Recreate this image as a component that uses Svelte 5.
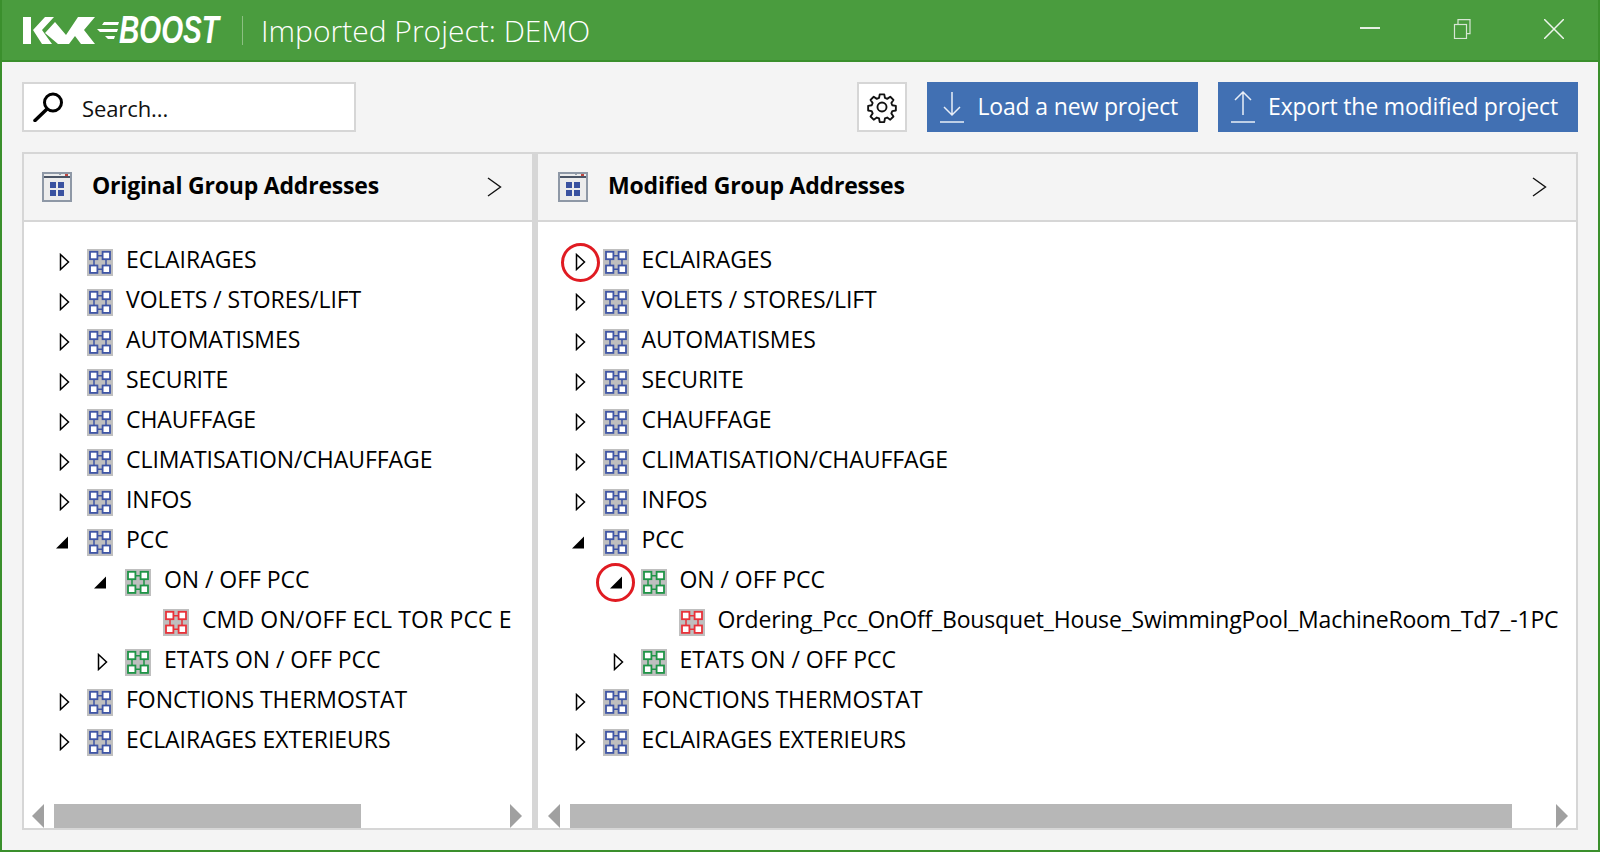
<script>
  const groups = [
    { name: "ECLAIRAGES" },
    { name: "VOLETS / STORES/LIFT" },
    { name: "AUTOMATISMES" },
    { name: "SECURITE" },
    { name: "CHAUFFAGE" },
    { name: "CLIMATISATION/CHAUFFAGE" },
    { name: "INFOS" },
    { name: "PCC", open: true },
    { name: "ON / OFF PCC", level: 1, open: true, color: "green" },
    { name: "@leaf", level: 2, leaf: true, color: "red" },
    { name: "ETATS ON / OFF PCC", level: 1, color: "green" },
    { name: "FONCTIONS THERMOSTAT" },
    { name: "ECLAIRAGES EXTERIEURS" },
  ];

  const colors = { blue: "#3f55a5", green: "#1f9447", red: "#e8323a" };

  const panels = [
    { title: "Original Group Addresses", leaf: "CMD ON/OFF ECL TOR PCC E", thumb: 307, kind: "orig" },
    {
      title: "Modified Group Addresses",
      leaf: "Ordering_Pcc_OnOff_Bousquet_House_SwimmingPool_MachineRoom_Td7_-1PC",
      thumb: 942,
      kind: "mod",
    },
  ];
</script>

{#snippet tableIcon()}
  <svg class="table-icon" width="30" height="30" viewBox="0 0 30 30">
    <rect x="1" y="1" width="28" height="28" fill="#ececec" stroke="#8e98a6" stroke-width="2" />
    <rect x="2" y="4" width="26" height="2" fill="#4b5566" />
    <rect x="17" y="2" width="2" height="1" fill="#9aa3ad" />
    <rect x="23" y="2" width="3" height="2" fill="#c0463f" />
    <rect x="8" y="10" width="6" height="6" fill="#3a52a0" />
    <rect x="16" y="10" width="6" height="6" fill="#3a52a0" />
    <rect x="8" y="18" width="6" height="6" fill="#3a52a0" />
    <rect x="16" y="18" width="6" height="6" fill="#3a52a0" />
  </svg>
{/snippet}

{#snippet groupIcon(color)}
  <svg class="group-icon" width="26" height="27" viewBox="0 0 26 27">
    <rect width="26" height="27" fill="#bfbfbf" />
    <path d="M7 10v7M19 10v7M10 6.700h6M10 20.300h6" stroke={colors[color]} stroke-width="1.500" fill="none" />
    <g stroke={colors[color]} stroke-width="1.800" fill="#fff">
      <rect x="3" y="2.800" width="7.400" height="7.400" />
      <rect x="15.600" y="2.800" width="7.400" height="7.400" />
      <rect x="3" y="16.500" width="7.400" height="7.400" />
      <rect x="15.600" y="16.500" width="7.400" height="7.400" />
    </g>
  </svg>
{/snippet}

{#snippet expander(open)}
  <svg class="expander" width="14" height="18" viewBox="0 0 14 18">
    {#if open}
      <path d="M12 3.500v12H0z" fill="#000" />
    {:else}
      <path d="M4.500 1.500l8 7.500-8 7.500z" fill="#fff" stroke="#000" stroke-width="1.500" />
    {/if}
  </svg>
{/snippet}

<div class="window">
  <header class="titlebar">
    <div class="logo">
      <svg width="72" height="27" viewBox="0 0 72 27" aria-label="KNX">
        <path fill="#fff" d="M0 0h8v27H0zM10 13L22 0h9L19 13l10 14H19z" />
        <path fill="#fff" d="M22 16l10-11 11 13L55 0h17L61 13l11 14H58l-6-8-6 8H35z" />
      </svg>
      <svg class="dash" width="24" height="27" viewBox="0 0 24 27">
        <path fill="#fff" d="M9 5h15l-1 3H7zM2 12h21l-1 3H5zM10 19h10l-1 3h-6z" />
      </svg>
      <span class="boost">BOOST</span>
    </div>
    <span class="sep"></span>
    <h1>Imported Project: DEMO</h1>
    <div class="winbtns">
      <svg width="20" height="20" viewBox="0 0 20 20"><path d="M0 9h20" stroke="#e6f0e4" stroke-width="2" /></svg>
      <svg width="20" height="20" viewBox="0 0 20 20" fill="none" stroke="#d7e6d4" stroke-width="1.200">
        <rect x="2.500" y="5.500" width="12" height="14" />
        <path d="M6 5.500V.6h12v14h-3.500" />
      </svg>
      <svg width="20" height="20" viewBox="0 0 20 20"><path d="M0 0l20 20M20 0L0 20" stroke="#eef5ec" stroke-width="1.500" /></svg>
    </div>
  </header>

  <main>
    <div class="toolbar">
      <label class="search">
        <svg width="31" height="30" viewBox="0 0 31 30" fill="none" stroke="#000">
          <circle cx="20" cy="10.500" r="8.500" stroke-width="3" />
          <path d="M14 17L2 28.500" stroke-width="3.500" stroke-linecap="round" />
        </svg>
        <input type="text" placeholder="Search..." />
      </label>
      <button class="gear" aria-label="Settings">
        <svg width="32" height="32" viewBox="0 0 24 24" fill="none" stroke="#111" stroke-width="1.400" stroke-linejoin="round">
          <circle cx="12" cy="12" r="3.400" />
          <path d="M10.300 2.500h3.400l.5 2.700 1.700.7 2.300-1.600 2.400 2.400-1.600 2.300.7 1.700 2.700.5v3.400l-2.700.5-.7 1.700 1.600 2.300-2.400 2.400-2.300-1.600-1.700.7-.5 2.700h-3.400l-.5-2.700-1.700-.7-2.300 1.600-2.400-2.400 1.600-2.300-.7-1.700-2.700-.5v-3.400l2.700-.5.7-1.700-1.600-2.300 2.400-2.400 2.300 1.600 1.700-.7z" />
        </svg>
      </button>
      <button class="action">
        <svg width="26" height="32" viewBox="0 0 26 32" fill="none" stroke="#e8eef7" stroke-width="1.500">
          <path d="M13 1v23M5 16l8 8 8-8M1 31h24" />
        </svg>
        <span>Load a new project</span>
      </button>
      <button class="action">
        <svg width="26" height="32" viewBox="0 0 26 32" fill="none" stroke="#e8eef7" stroke-width="1.500">
          <path d="M13 24V1M5 9l8-8 8 8M1 31h24" />
        </svg>
        <span>Export the modified project</span>
      </button>
    </div>

    <div class="panels">
      {#each panels as panel}
        <section class="panel {panel.kind}">
          <div class="panel-head">
            {@render tableIcon()}
            <h2>{panel.title}</h2>
            <svg class="chev" width="15" height="20" viewBox="0 0 15 20" fill="none" stroke="#111" stroke-width="1.400">
              <path d="M1 1l12.500 9L1 19" />
            </svg>
          </div>
          <div class="tree">
            {#each groups as g}
              <div class="row l{g.level ?? 0}">
                {#if g.leaf}
                  <span class="exp-slot"></span>
                {:else}
                  <span class="exp-slot">{@render expander(g.open)}</span>
                {/if}
                {@render groupIcon(g.color ?? "blue")}
                <span class="label" class:leaf={g.leaf}>{g.leaf ? panel.leaf : g.name}</span>
              </div>
            {/each}
          </div>
          <div class="hscroll">
            <svg width="12" height="24" viewBox="0 0 12 24"><path d="M12 0v24L0 12z" fill="#a0a0a0" /></svg>
            <div class="track"><div class="thumb" style="width: {panel.thumb}px"></div></div>
            <svg width="12" height="24" viewBox="0 0 12 24"><path d="M0 0v24L12 12z" fill="#a0a0a0" /></svg>
          </div>
        </section>
      {/each}
      <div class="mark m1"></div>
      <div class="mark m2"></div>
    </div>
  </main>
</div>

<style>
  :global(body) {
    margin: 0;
    background: #f4f4f4;
  }

  .window {
    width: 1600px;
    height: 852px;
    box-sizing: border-box;
    display: flex;
    flex-direction: column;
    font-family: "Open Sans", "Noto Sans", sans-serif;
    color: #000;
    background: #f4f4f4;
    border: 2px solid #3a8f2c;
    border-top: 0;
    overflow: hidden;
  }

  .titlebar {
    height: 62px;
    margin: 0 -2px;
    flex: none;
    box-sizing: border-box;
    background: #4a9c3e;
    border-bottom: 2px solid #3a8f2c;
    display: flex;
    align-items: center;
    padding-left: 23px;
    color: #fff;
  }

  .logo {
    display: flex;
    align-items: center;
    width: 197px;
  }

  .logo svg {
    flex: none;
  }

  .boost {
    flex: none;
    font-family: "Liberation Sans", sans-serif;
    font-weight: 700;
    font-style: italic;
    font-size: 38px;
    line-height: 1;
    display: inline-block;
    transform: scaleX(0.74);
    transform-origin: left center;
  }

  .sep {
    width: 1px;
    height: 29px;
    margin: 0 18px 0 22px;
    background: #8cc082;
  }

  h1 {
    margin: 0;
    font-size: 30px;
    font-weight: 300;
    white-space: nowrap;
  }

  .winbtns {
    margin-left: auto;
    margin-right: 36px;
    display: flex;
    gap: 72px;
    padding-bottom: 2px;
  }

  main {
    flex: 1;
    min-height: 0;
    display: flex;
    flex-direction: column;
    padding: 20px;
  }

  .toolbar {
    display: flex;
    height: 50px;
    flex: none;
  }

  .search {
    width: 334px;
    box-sizing: border-box;
    border: 2px solid #d6d6d6;
    background: #fff;
    display: flex;
    align-items: center;
    padding-left: 9px;
    gap: 18px;
  }

  .search input {
    border: 0;
    outline: 0;
    flex: 1;
    min-width: 0;
    padding: 1px 0 0;
    font: inherit;
    font-size: 22px;
    letter-spacing: -0.1px;
  }

  .search input::placeholder {
    color: #111;
    opacity: 1;
  }

  .gear {
    margin-left: auto;
    width: 50px;
    height: 50px;
    padding: 0;
    box-sizing: border-box;
    border: 2px solid #d6d6d6;
    background: #fff;
    display: flex;
    align-items: center;
    justify-content: center;
  }

  .action {
    margin-left: 20px;
    height: 50px;
    border: 0;
    padding: 0 20px 0 12px;
    background: #4170b3;
    color: #fff;
    font: inherit;
    font-size: 23px;
    letter-spacing: -0.16px;
    display: flex;
    align-items: center;
    gap: 12px;
    white-space: nowrap;
  }

  .action span {
    margin-bottom: 3px;
  }

  .panels {
    position: relative;
    flex: 1;
    min-height: 0;
    margin-top: 20px;
    display: flex;
    gap: 6px;
    background: #d6d6d6;
  }

  .panel {
    box-sizing: border-box;
    display: flex;
    flex-direction: column;
    border: 2px solid #d6d6d6;
    background: #fff;
    min-width: 0;
  }

  .panel.orig {
    width: 510px;
    flex: none;
    border-right: 0;
  }

  .panel.mod {
    flex: 1;
    border-left: 0;
  }

  .panel-head {
    height: 68px;
    flex: none;
    box-sizing: border-box;
    background: #f4f4f4;
    border-bottom: 2px solid #d6d6d6;
    display: flex;
    align-items: center;
    padding: 0 30px 0 18px;
  }

  .panel.mod .panel-head {
    padding: 0 29px 0 20px;
  }

  h2 {
    margin: 0 0 4px 20px;
    font-size: 23px;
    font-weight: 700;
    letter-spacing: -0.2px;
    flex: 1;
  }

  .tree {
    flex: 1;
    min-height: 0;
    overflow: hidden;
    padding: 20px 0 0;
  }

  .row {
    height: 40px;
    display: flex;
    align-items: center;
    white-space: nowrap;
    font-size: 23px;
    letter-spacing: -0.05px;
    padding-left: 30px;
  }

  .row.l1 {
    padding-left: 68px;
  }

  .row.l2 {
    padding-left: 106px;
  }

  .panel.mod .row {
    padding-left: 31.500px;
  }

  .panel.mod .row.l1 {
    padding-left: 69.500px;
  }

  .panel.mod .row.l2 {
    padding-left: 107.500px;
  }

  .exp-slot {
    width: 33px;
    height: 18px;
    flex: none;
    display: block;
  }

  .expander {
    display: block;
    margin-left: 2px;
  }

  .group-icon {
    flex: none;
  }

  .label {
    margin: 0 0 6px 13px;
  }

  .panel.orig .leaf {
    letter-spacing: 0.13px;
  }

  .panel.mod .leaf {
    letter-spacing: -0.16px;
  }

  .hscroll {
    height: 24px;
    flex: none;
    display: flex;
    align-items: stretch;
    padding: 0 10px 0 8px;
    gap: 10px;
  }

  .panel.mod .hscroll {
    padding: 0 8px 0 9.500px;
  }

  .track {
    flex: 1;
    min-width: 0;
  }

  .thumb {
    height: 100%;
    background: #b7b7b7;
  }

  /* red callouts drawn over the tree */
  .mark {
    position: absolute;
    width: 39px;
    height: 39px;
    box-sizing: border-box;
    border: 3px solid #e01b22;
    border-radius: 50%;
  }

  .m1 {
    left: 539px;
    top: 91px;
  }

  .m2 {
    left: 574px;
    top: 411px;
  }
</style>
